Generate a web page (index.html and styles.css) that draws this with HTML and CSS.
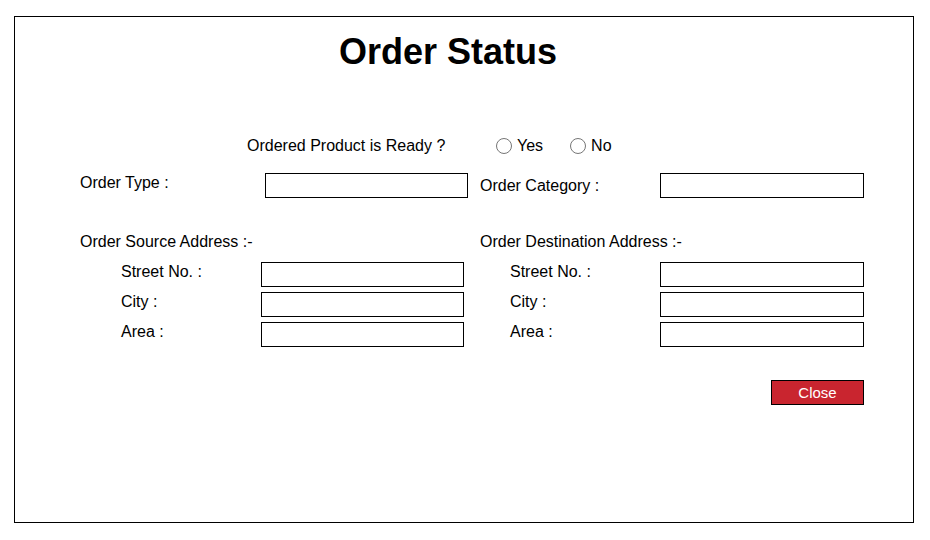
FILE: index.html
```html
<!DOCTYPE html>
<html lang="en">
<head>
<meta charset="utf-8">
<meta name="viewport" content="width=device-width, initial-scale=1">
<title>Order Status</title>
<link rel="stylesheet" href="styles.css">
</head>
<body>
<main class="panel">
  <h1 class="title">Order Status</h1>
  <form class="form">
    <fieldset class="ready">
      <legend class="ready-legend">Ordered Product is Ready ?</legend>
      <label class="choice"><input class="radio" type="radio" name="ready" value="yes">Yes</label>
      <label class="choice"><input class="radio" type="radio" name="ready" value="no">No</label>
    </fieldset>
    <div class="columns">
      <div class="field type">
        <label for="order-type">Order Type :</label>
        <input class="box" id="order-type" type="text">
      </div>
      <div class="field category">
        <label for="order-category">Order Category :</label>
        <input class="box" id="order-category" type="text">
      </div>
    </div>
    <div class="columns addresses">
      <section class="address">
        <h2 class="heading">Order Source Address :-</h2>
        <div class="field source"><label for="src-street">Street No. :</label><input class="box" id="src-street" type="text"></div>
        <div class="field source"><label for="src-city">City :</label><input class="box" id="src-city" type="text"></div>
        <div class="field source"><label for="src-area">Area :</label><input class="box" id="src-area" type="text"></div>
      </section>
      <section class="address">
        <h2 class="heading">Order Destination Address :-</h2>
        <div class="field destination"><label for="dst-street">Street No. :</label><input class="box" id="dst-street" type="text"></div>
        <div class="field destination"><label for="dst-city">City :</label><input class="box" id="dst-city" type="text"></div>
        <div class="field destination"><label for="dst-area">Area :</label><input class="box" id="dst-area" type="text"></div>
      </section>
    </div>
    <div class="actions">
      <button class="close" type="button">Close</button>
    </div>
  </form>
</main>
</body>
</html>
```
FILE: styles.css
```css
* {
  box-sizing: border-box;
}

body {
  margin: 0;
  padding: 16px 16px 17px 14px;
  min-height: 100vh;
  display: flex;
  background: #fff;
  color: #000;
  font: 16px/20px "Liberation Sans", Arial, sans-serif;
}

.panel {
  flex: 1;
  border: 1px solid #000;
  padding: 15px 49px 24px 65px;
}

.title {
  margin: 0 48px 0 0;
  font-size: 36px;
  line-height: 40px;
  text-align: center;
}

.form {
  padding-top: 64px;
}

.ready {
  display: flex;
  align-items: center;
  gap: 27px;
  margin: 0;
  padding: 0 0 0 167px;
  border: 0;
}

.ready-legend {
  float: left;
  width: 222px;
  padding: 0;
}

.choice {
  display: flex;
  align-items: center;
  gap: 5px;
}

.radio {
  appearance: none;
  width: 16px;
  height: 16px;
  margin: 0;
  border: 1px solid #767676;
  border-radius: 50%;
  background: #fff;
}

.radio:checked {
  box-shadow: inset 0 0 0 3px #fff;
  background: #000;
}

.columns {
  display: grid;
  grid-template-columns: 400px 1fr;
  padding-top: 17px;
}

.addresses {
  padding-top: 34px;
}

.field {
  display: grid;
  grid-template-columns: 180px 204px;
  align-items: start;
}

.type {
  grid-template-columns: 185px 203px;
}

.category {
  align-items: center;
}

.address {
  display: grid;
  gap: 5px;
}

.heading {
  margin: 0 0 5px;
  font-size: 16px;
  font-weight: 400;
}

.source {
  grid-template-columns: 140px 203px;
  padding-left: 41px;
}

.destination {
  grid-template-columns: 150px 204px;
  padding-left: 30px;
}

.box {
  width: 100%;
  height: 25px;
  padding: 0 4px;
  border: 1px solid #000;
  border-radius: 0;
  background: #fff;
  font: inherit;
}

.actions {
  display: flex;
  justify-content: flex-end;
  padding-top: 33px;
}

.close {
  width: 93px;
  height: 25px;
  padding: 0;
  border: 1px solid #000;
  background: #c9252f;
  color: #fff;
  font: inherit;
  font-size: 15px;
}
```
